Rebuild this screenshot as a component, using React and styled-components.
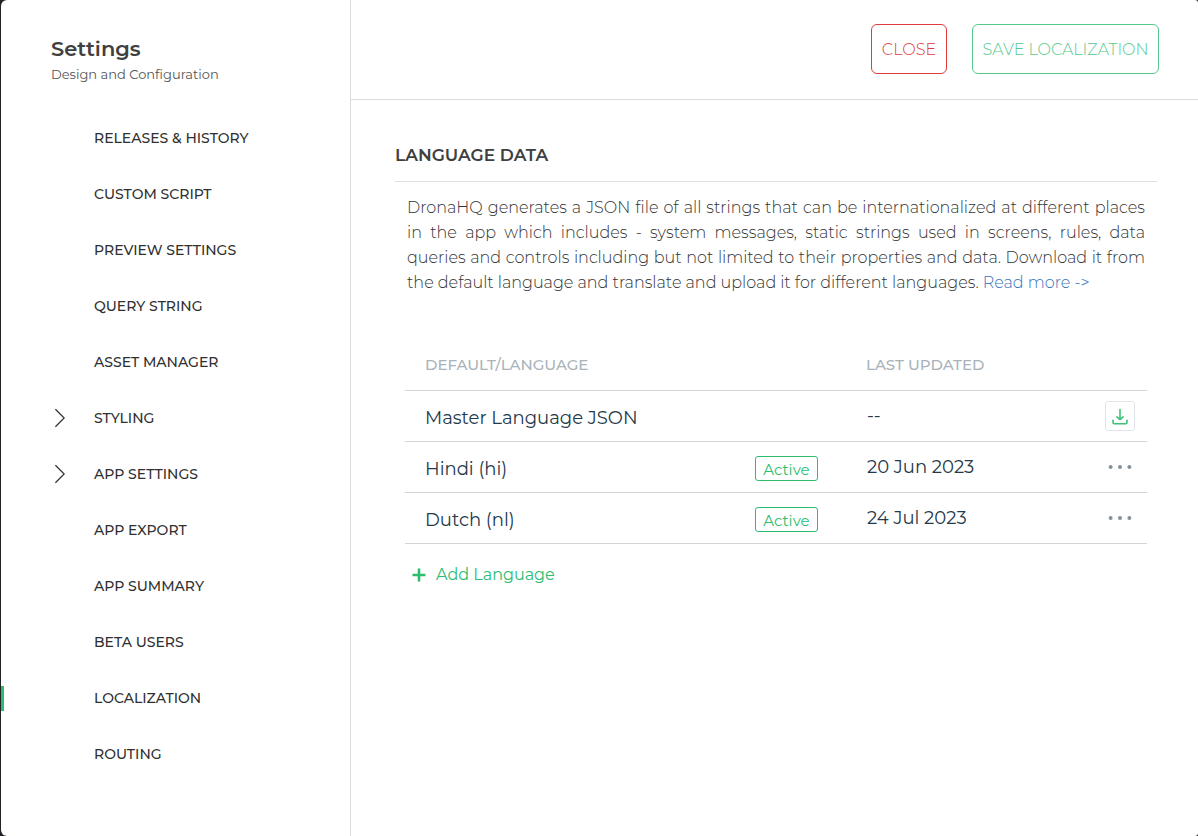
import React from "react";
import styled, { createGlobalStyle } from "styled-components";

const GlobalStyle = createGlobalStyle`
  *, *::before, *::after { box-sizing: border-box; }
  body {
    margin: 0;
    background: #232327;
    color: #404040;
    font-family: Montserrat, Inter, "Liberation Sans", sans-serif;
  }
  button { font-family: inherit; cursor: pointer; }
`;

const Frame = styled.div`
  display: grid;
  grid-template-columns: 350px minmax(0, 1fr);
  min-height: 100vh;
  margin-left: 1px;
  background: #fff;
  border-radius: 6px 3px 3px 6px;
`;

const Sidebar = styled.aside`
  border-right: 1px solid #dcdcdc;
`;

const SidebarHead = styled.header`
  padding: 36px 50px 24px;
`;

const Title = styled.h1`
  margin: 0;
  font-size: 21px;
  line-height: 26px;
  font-weight: 600;
`;

const Subtitle = styled.p`
  margin: 0;
  font-size: 13px;
  line-height: 24px;
  font-weight: 400;
  color: #555;
`;

const NavList = styled.ul`
  margin: 0;
  padding: 0;
  list-style: none;
`;

const NavItem = styled.li`
  display: flex;
  align-items: center;
  height: 56px;
`;

const Marker = styled.span`
  width: 3px;
  height: 25px;
  background: ${(p) => (p.$active ? "#2dbd6e" : "transparent")};
`;

const NavLink = styled.a`
  display: flex;
  align-items: center;
  padding-left: 47px;
  font-size: 14px;
  line-height: 20px;
  font-weight: 500;
  color: #303030;
  text-decoration: none;
`;

const Caret = styled.span`
  display: flex;
  width: 43px;
  padding-left: 3px;
`;

const Main = styled.main`
  min-width: 0;
`;

const Toolbar = styled.div`
  display: flex;
  justify-content: flex-end;
  align-items: center;
  gap: 25px;
  height: 100px;
  padding: 0 39px 2px 0;
  border-bottom: 1px solid #dcdcdc;
`;

const tones = { danger: "#df3b3b", success: "#56c98b" };

const OutlineButton = styled.button`
  height: 50px;
  min-width: ${(p) => (p.$wide ? 187 : 76)}px;
  padding: 2px 8px 0;
  border: 1px solid ${(p) => tones[p.$tone]};
  border-radius: 6px;
  background: #fff;
  color: ${(p) => tones[p.$tone]};
  font-size: 16px;
  font-weight: 300;
  white-space: nowrap;
`;

const Section = styled.section`
  padding: 42px 41px 0 44px;
`;

const SectionTitle = styled.h2`
  margin: 0;
  padding-bottom: 13px;
  border-bottom: 1px solid #e0e0e0;
  font-size: 17px;
  line-height: 26px;
  font-weight: 600;
`;

const Description = styled.p`
  margin: 0;
  padding: 13px 12px 44px;
  font-size: 16px;
  line-height: 25px;
  font-weight: 300;
  color: #333;
  text-align: justify;
`;

const TextLink = styled.a`
  color: #3672bd;
  text-decoration: none;
`;

const TableArea = styled.div`
  padding: 0 10px;
`;

const Table = styled.table`
  width: 100%;
  table-layout: fixed;
  border-collapse: separate;
  border-spacing: 0;
`;

const Col = styled.col`
  width: ${(p) => p.$width};
`;

const HeadCell = styled.th`
  height: 52px;
  padding: 0 0 0 ${(p) => p.$indent || 0}px;
  border-bottom: 1px solid #d0d6d9;
  text-align: left;
  font-size: 15px;
  font-weight: 500;
  color: #a9b3b9;
`;

const Cell = styled.td`
  height: 51px;
  padding: ${(p) => (p.$low ? 3 : 0)}px 0 0 ${(p) => p.$indent || 0}px;
  border-bottom: 1px solid #d0d6d9;
  font-size: 18px;
  font-weight: 400;
  color: #24394a;
`;

const Badge = styled.span`
  display: flex;
  align-items: center;
  justify-content: center;
  width: 63px;
  height: 25px;
  padding-top: 1px;
  border: 1px solid #2dbd6e;
  border-radius: 3px;
  color: #2dbd6e;
  font-size: 15px;
  font-weight: 400;
`;

const IconButton = styled.button`
  display: flex;
  align-items: center;
  justify-content: center;
  width: 30px;
  height: 30px;
  padding: 0;
  border: 1px solid ${(p) => (p.$boxed ? "#e1e4e6" : "transparent")};
  border-radius: 3px;
  background: transparent;
`;

const AddButton = styled.button`
  display: flex;
  align-items: center;
  gap: 10px;
  margin: 19px 0 0;
  padding: 0 7px;
  border: 0;
  background: transparent;
  color: #2dbd6e;
  font-size: 16px;
  line-height: 24px;
  font-weight: 400;
`;

const ChevronIcon = () => (
  <svg width="11" height="20" viewBox="0 0 11 20" fill="none" stroke="#333" strokeWidth="1.3" aria-hidden="true">
    <path d="M1.4 1.2 10.2 10 1.4 18.8" />
  </svg>
);

const DownloadIcon = () => (
  <svg width="16" height="17" viewBox="0 0 16 17" fill="none" stroke="#3cc27a" strokeWidth="1.6" strokeLinecap="round" strokeLinejoin="round" aria-hidden="true">
    <path d="M8 1.5v10M4.9 8.8 8 11.7l3.1-2.9M1 12.3v2.2q0 1.2 1.2 1.2h11.6q1.2 0 1.2-1.2v-2.2" />
  </svg>
);

const DotsIcon = () => (
  <svg width="24" height="6" viewBox="0 0 24 6" fill="#83929c" aria-hidden="true">
    <circle cx="2.6" cy="3" r="2" />
    <circle cx="12" cy="3" r="2" />
    <circle cx="21.4" cy="3" r="2" />
  </svg>
);

const PlusIcon = () => (
  <svg width="14" height="14" viewBox="0 0 14 14" fill="none" stroke="#2dbd6e" strokeWidth="2.6" aria-hidden="true">
    <path d="M7 .5v13M.5 7h13" />
  </svg>
);

const navItems = [
  { label: "RELEASES & HISTORY" },
  { label: "CUSTOM SCRIPT" },
  { label: "PREVIEW SETTINGS" },
  { label: "QUERY STRING" },
  { label: "ASSET MANAGER" },
  { label: "STYLING", nested: true },
  { label: "APP SETTINGS", nested: true },
  { label: "APP EXPORT" },
  { label: "APP SUMMARY" },
  { label: "BETA USERS" },
  { label: "LOCALIZATION", active: true },
  { label: "ROUTING" },
];

const languages = [
  { name: "Master Language JSON", updated: "--", master: true },
  { name: "Hindi (hi)", updated: "20 Jun 2023", status: "Active" },
  { name: "Dutch (nl)", updated: "24 Jul 2023", status: "Active" },
];

export default function App() {
  return (
    <>
      <GlobalStyle />
      <Frame>
        <Sidebar>
          <SidebarHead>
            <Title>Settings</Title>
            <Subtitle>Design and Configuration</Subtitle>
          </SidebarHead>
          <nav>
            <NavList>
              {navItems.map((item) => (
                <NavItem key={item.label}>
                  <Marker $active={item.active} />
                  <NavLink href="#" aria-current={item.active ? "page" : undefined}>
                    <Caret>{item.nested && <ChevronIcon />}</Caret>
                    {item.label}
                  </NavLink>
                </NavItem>
              ))}
            </NavList>
          </nav>
        </Sidebar>
        <Main>
          <Toolbar>
            <OutlineButton type="button" $tone="danger">CLOSE</OutlineButton>
            <OutlineButton type="button" $tone="success" $wide>SAVE LOCALIZATION</OutlineButton>
          </Toolbar>
          <Section>
            <SectionTitle>LANGUAGE DATA</SectionTitle>
            <Description>
              DronaHQ generates a JSON file of all strings that can be internationalized at
              different places in the app which includes - system messages, static strings used
              in screens, rules, data queries and controls including but not limited to their
              properties and data. Download it from the default language and translate and upload
              it for different languages. <TextLink href="#">Read more -&gt;</TextLink>
            </Description>
            <TableArea>
              <Table>
                <colgroup>
                  <Col $width="auto" />
                  <Col $width="111px" />
                  <Col $width="239px" />
                  <Col $width="42px" />
                </colgroup>
                <thead>
                  <tr>
                    <HeadCell scope="col" $indent={20} colSpan={2}>DEFAULT/LANGUAGE</HeadCell>
                    <HeadCell scope="col" colSpan={2}>LAST UPDATED</HeadCell>
                  </tr>
                </thead>
                <tbody>
                  {languages.map((row) => (
                    <tr key={row.name}>
                      <Cell $indent={20} $low>{row.name}</Cell>
                      <Cell $low>{row.status && <Badge>{row.status}</Badge>}</Cell>
                      <Cell $indent={1}>{row.updated}</Cell>
                      <Cell>
                        <IconButton
                          type="button"
                          $boxed={row.master}
                          aria-label={row.master ? "Download" : "More options"}
                        >
                          {row.master ? <DownloadIcon /> : <DotsIcon />}
                        </IconButton>
                      </Cell>
                    </tr>
                  ))}
                </tbody>
              </Table>
              <AddButton type="button">
                <PlusIcon />
                Add Language
              </AddButton>
            </TableArea>
          </Section>
        </Main>
      </Frame>
    </>
  );
}
